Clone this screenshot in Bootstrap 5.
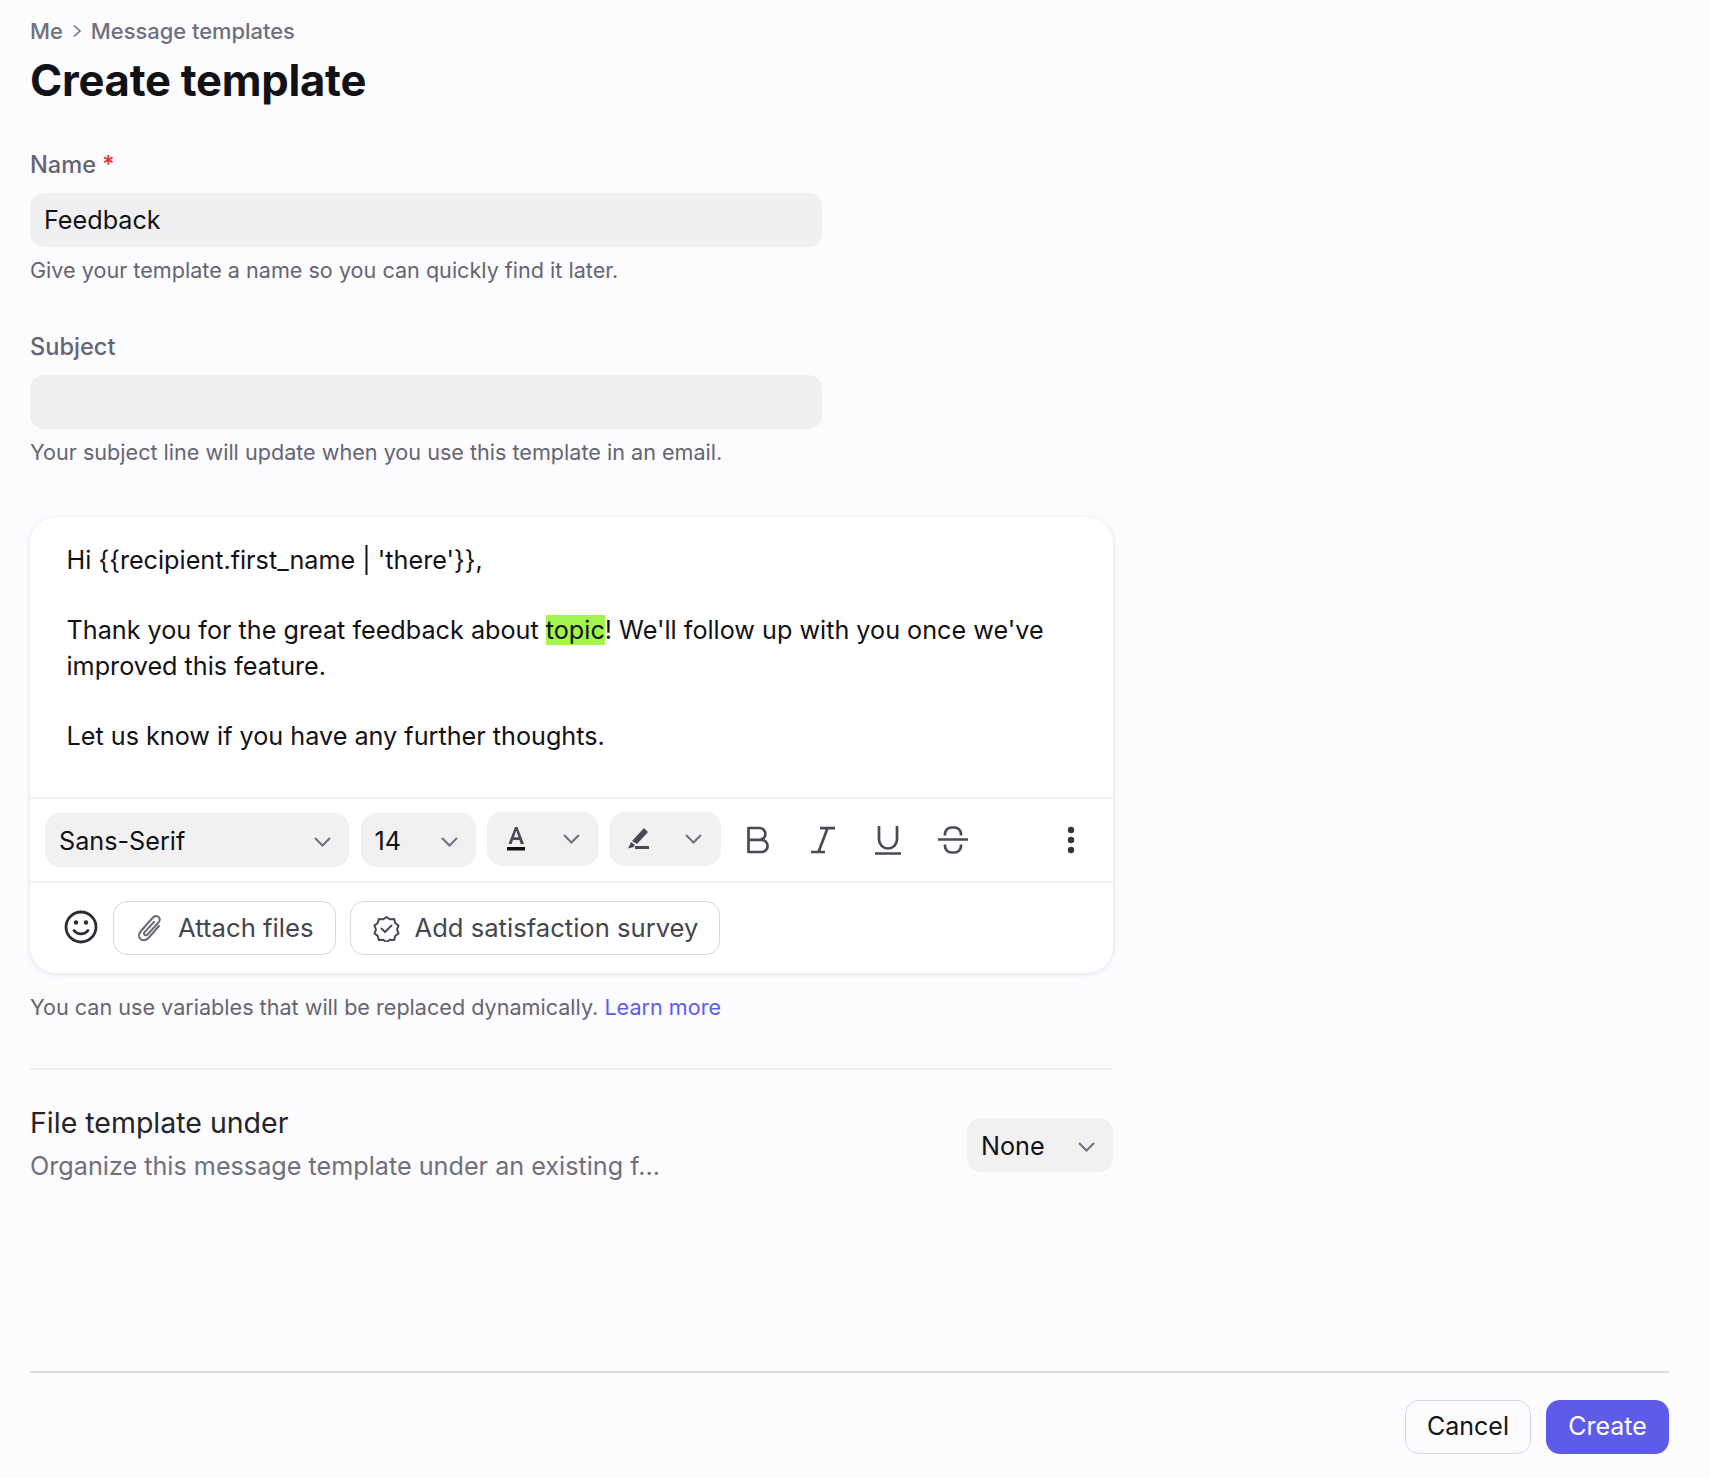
<!DOCTYPE html>
<html lang="en"><head><meta charset="utf-8"><title>Create template</title>
<link href="https://cdn.jsdelivr.net/npm/bootstrap@5.3.0/dist/css/bootstrap.min.css" rel="stylesheet">
<style>
html,body{height:100%}
body{background:#fcfcff;font-family:Inter,"Liberation Sans",sans-serif;color:#121216;-webkit-font-smoothing:antialiased}
.pg{height:1478px;padding:0 41px 24px 30px}
.crumb{height:20px;margin-top:21px;font-size:21.9px;line-height:20px;font-weight:500;color:#6f6f7e;gap:9px}
.ttl{font-size:43.6px;line-height:54px;font-weight:700;margin:13px 0 0;letter-spacing:-.25px;color:#121216}
.fld{width:792px}
.f1{margin-top:44px}.f2{margin-top:51px}
.lbl{display:block;font-size:23.6px;line-height:26px;font-weight:500;color:#656572;margin:0 0 15px}
.req{color:#e5342b}
.inp{background:#f0f0f2;border:0;height:54px;border-radius:14px;width:100%;padding:0 14px;font-size:25.2px;color:#121216;display:block;outline:0}
.hlp{font-size:21.6px;line-height:26px;color:#656572;margin-top:10px}
.hlp2{margin-top:21px}
.ed{width:1083px;height:456px;margin-top:52px;background:#fff;border-radius:26px;box-shadow:0 1px 5px rgba(20,20,60,.12);overflow:hidden}
.edt{height:282px;padding:25.500px 36px 0 36.500px;font-size:25.2px;line-height:35.5px;color:#121216;border-bottom:2px solid #f0f0f2;margin:0}
.gapl{height:35px}
.hl{background:#a1f54c}
.tb{height:84px;padding:0 15px;border-bottom:2px solid #f0f0f2;gap:11.500px}
.chip{height:54px;background:#f1f1f2;border-radius:15px;padding:3px 17px 0 14px;font-size:25.2px;color:#121216}
.c1{width:304px}.c2{width:115px}.c3{width:111px;padding:0 17px 0 19px;margin-bottom:2px}.c4{width:111px;padding:0 18px 0 16px;margin-bottom:2px}
.c5{width:146px;margin-top:2px}
.ic{color:#4a4a55;flex:none}
.ibox{width:65px;flex:none}
.irow{margin-left:-7px}
.more{margin-left:auto;margin-right:23px}
.act{height:90px;padding:0 0 0 34px}
.smile{margin-right:15px;margin-bottom:2px}
.obtn{height:54px;border:1px solid #d8d8dc;border-radius:14px;background:#fff;font-size:25.6px;color:#46464f;gap:15px;padding:0 21px 0 23px;margin-right:14px}
.attach{font-size:25.7px}
.survey{padding:0 21px 0 22px;gap:15px}
.lnk{color:#5f5bea;text-decoration:none}
.rule{border-top:2px solid #eeeef0;width:1083px;margin-top:48px}
.frow{width:1083px;margin-top:36px}
.ftl{font-size:28.500px;line-height:34px;color:#24242a}
.fsub{font-size:25.2px;line-height:32px;color:#6f6f7e;margin-top:10px}
.foot{border-top:2px solid #dcdcdf;margin-top:0;padding-top:27px;gap:15px}
.bt{height:54px;border-radius:14px;font-size:25px;padding:0;display:flex;align-items:center;justify-content:center}
.bc{width:126px;background:#fcfcff;border:1px solid #d8d8dc;color:#121216}
.bp{width:123px;background:#5f5bea;border:0;color:#fff}
</style></head><body>
<div class="pg d-flex flex-column">
<nav class="crumb d-flex align-items-center"><span>Me</span><svg width="10" height="16" viewBox="0 0 10 16" fill="none" stroke="#6f6f7e" stroke-width="1.6"><path d="M2 2.500 8 8l-6 5.500"/></svg><span>Message templates</span></nav>
<h1 class="ttl">Create template</h1>
<div class="fld f1"><label class="lbl">Name <span class="req">*</span></label><input class="inp" value="Feedback"><div class="hlp">Give your template a name so you can quickly find it later.</div></div>
<div class="fld f2"><label class="lbl">Subject</label><input class="inp"><div class="hlp">Your subject line will update when you use this template in an email.</div></div>
<div class="ed">
<div class="edt"><div>Hi {{recipient.first_name | 'there'}},</div><div class="gapl"></div><div>Thank you for the great feedback about <span class="hl">topic</span>! We'll follow up with you once we've</div><div>improved this feature.</div><div class="gapl"></div><div>Let us know if you have any further thoughts.</div></div>
<div class="tb d-flex align-items-center">
<div class="chip c1 d-flex align-items-center justify-content-between"><span>Sans-Serif</span><svg class="ic" width="19" height="12" viewBox="0 0 19 12" fill="none" stroke="#6f6f7e" stroke-width="2"><path d="M2 2l7.500 7.500L17 2"/></svg></div>
<div class="chip c2 d-flex align-items-center justify-content-between"><span>14</span><svg class="ic" width="19" height="12" viewBox="0 0 19 12" fill="none" stroke="#6f6f7e" stroke-width="2"><path d="M2 2l7.500 7.500L17 2"/></svg></div>
<div class="chip c3 d-flex align-items-center justify-content-between"><svg width="20" height="28" viewBox="0 0 20 28"><path d="M2.500 19 9 2h2.500L18 19h-3.200l-1.400-4H7l-1.400 4zM8 12.300h4.500L10.200 5.500z" fill="#4a4a55"/><rect x="1" y="22" width="18" height="3.500" fill="#121216"/></svg><svg class="ic" width="19" height="12" viewBox="0 0 19 12" fill="none" stroke="#6f6f7e" stroke-width="2"><path d="M2 2l7.500 7.500L17 2"/></svg></div>
<div class="chip c4 d-flex align-items-center justify-content-between"><svg width="24" height="26" viewBox="0 0 24 26" fill="#4a4a55"><path d="M18 2l4 4-11 12-5-3zM5 16l4 3-1.500 2-5.500 1.500z"/><rect x="9" y="20" width="14" height="3"/></svg><svg class="ic" width="19" height="12" viewBox="0 0 19 12" fill="none" stroke="#6f6f7e" stroke-width="2"><path d="M2 2l7.500 7.500L17 2"/></svg></div>
<div class="d-flex align-items-center flex-grow-1 irow">
<div class="ibox d-flex justify-content-center"><svg class="ic" width="24" height="28" viewBox="0 0 24 28" fill="none" stroke="currentColor" stroke-width="2.700"><path d="M2.500 2h11a5.800 5.800 0 0 1 0 11.800h-11zM2.500 13.800h13a6 6 0 0 1 0 12.200h-13z" stroke-linejoin="round"/></svg></div>
<div class="ibox d-flex justify-content-center"><svg class="ic" width="24" height="28" viewBox="0 0 24 28" fill="none" stroke="currentColor" stroke-width="2.700"><path d="M9 2.200h15M0 26h14M16.500 2.200 7.500 26"/></svg></div>
<div class="ibox d-flex justify-content-center"><svg class="ic" width="26" height="30" viewBox="0 0 26 30" fill="none" stroke="currentColor" stroke-width="2.700"><path d="M4 1v13.500a9 9 0 0 0 18 0V1M0 28.500h26"/></svg></div>
<div class="ibox d-flex justify-content-center"><svg class="ic" width="30" height="30" viewBox="0 0 30 30" fill="none" stroke="currentColor" stroke-width="2.700"><path d="M0 14.500h30M7 10.500V9a6.500 6.500 0 0 1 6.500-6.500h3A6.500 6.500 0 0 1 23 9v1.500M7 19.500V21a6.500 6.500 0 0 0 6.500 6.500h3A6.500 6.500 0 0 0 23 21v-1.500"/></svg></div>
<svg class="more" width="8" height="28" viewBox="0 0 8 28" fill="#35353d"><circle cx="4" cy="4" r="3.200"/><circle cx="4" cy="14" r="3.200"/><circle cx="4" cy="24" r="3.200"/></svg>
</div></div>
<div class="act d-flex align-items-center">
<svg class="smile" width="34" height="34" viewBox="0 0 34 34" fill="none" stroke="#2d2d34" stroke-width="2.800"><circle cx="17" cy="17" r="15"/><path d="M10 20.500c3.500 4.500 10.500 4.500 14 0" stroke-linecap="round"/><circle cx="12" cy="12.500" r="2.200" fill="#2d2d34" stroke="none"/><circle cx="22" cy="12.500" r="2.200" fill="#2d2d34" stroke="none"/></svg>
<div class="obtn attach d-flex align-items-center"><svg width="26" height="28" viewBox="0 0 26 28" fill="none" stroke="#6a6a75" stroke-width="2" stroke-linecap="round"><path d="M22 12 11.500 24c-2.500 2.800-6 2.800-8 1s-2-5 .5-8L15.500 4c2-2.200 4.500-2.200 6-1s1.500 3.500 0 5.500L10.500 20.500c-1 1-2.300 1-3 .3s-.6-2 .3-3L17 8"/></svg><span>Attach files</span></div>
<div class="obtn survey d-flex align-items-center"><svg width="27" height="27" viewBox="0 0 27 27" fill="none" stroke="#4a4a55" stroke-width="2" stroke-linejoin="round"><path d="M13.500 2l3.500 2.300 4.200-.3 1 4 3.300 2.600-1.500 3.900 1.500 3.900-3.300 2.600-1 4-4.200-.3-3.500 2.300-3.500-2.300-4.200.3-1-4L1.500 18.400 3 14.500 1.500 10.600 4.800 8l1-4 4.200.3z"/><path d="M8.500 13.500l3.500 3.500 6.500-6.500" stroke-linecap="round"/></svg><span>Add satisfaction survey</span></div>
</div></div>
<div class="hlp hlp2">You can use variables that will be replaced dynamically. <a class="lnk" href="#">Learn more</a></div>
<div class="rule"></div>
<div class="frow d-flex justify-content-between align-items-center">
<div><div class="ftl">File template under</div><div class="fsub">Organize this message template under an existing f...</div></div>
<div class="chip c5 d-flex align-items-center justify-content-between"><span>None</span><svg class="ic" width="19" height="12" viewBox="0 0 19 12" fill="none" stroke="#6f6f7e" stroke-width="2"><path d="M2 2l7.500 7.500L17 2"/></svg></div>
</div>
<div class="flex-grow-1"></div>
<div class="foot d-flex justify-content-end"><button class="bt bc">Cancel</button><button class="bt bp">Create</button></div>
</div>
<script src="https://cdn.jsdelivr.net/npm/bootstrap@5.3.0/dist/js/bootstrap.bundle.min.js"></script>
</body></html>
